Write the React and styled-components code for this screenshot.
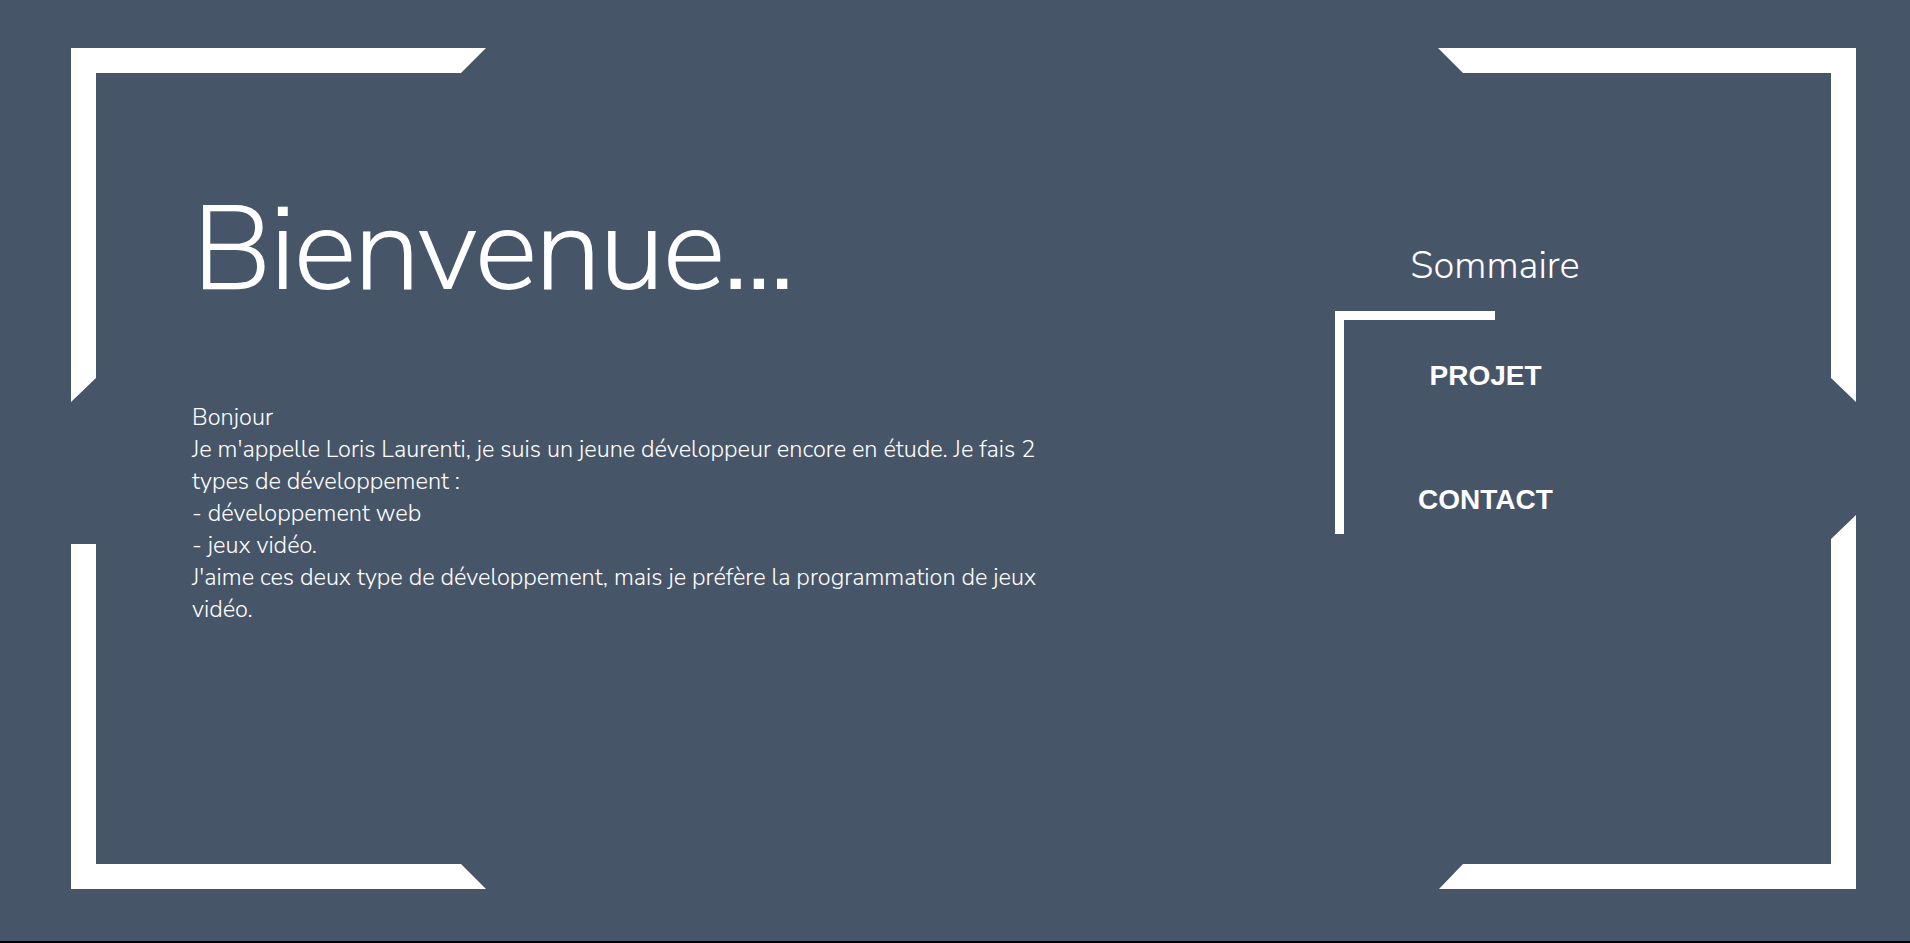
import React from "react";
import styled, { createGlobalStyle } from "styled-components";

const GlobalStyle = createGlobalStyle`
  html, body {
    margin: 0;
    padding: 0;
    background-color: #000;
  }
  * {
    box-sizing: border-box;
  }
`;

const Page = styled.div`
  height: 941px;
  background-color: #475569;
  padding: 48px 54px 52px 71px;
  overflow: hidden;
`;

const Frame = styled.div`
  position: relative;
  height: 100%;
`;

// decorative corner brackets, drawn with clip-path
const Corner = styled.div`
  position: absolute;
  background-color: #fff;
  width: ${(p) => p.w}px;
  height: ${(p) => p.h}px;
  clip-path: ${(p) => p.clip};
  ${(p) => p.pos}
`;

const Content = styled.div`
  display: flex;
  padding: 130px 0 0 121px;
`;

const Main = styled.section`
  width: 870px;
  color: #fff;
`;

const Title = styled.h1`
  margin: 0;
  font-family: "Nunito Sans", "Nunito", "Open Sans", sans-serif;
  font-weight: 300;
  font-size: 120px;
  letter-spacing: -3px;
  line-height: 1.2;
`;

const Intro = styled.p`
  margin: 79px 0 0;
  font-family: "Nunito Sans", "Nunito", "Open Sans", sans-serif;
  font-weight: 300;
  font-size: 23.5px;
  line-height: 32px;
`;

const Side = styled.nav`
  width: 320px;
  margin-left: 273px;
  padding-top: 65px;
  color: #fff;
`;

const SideTitle = styled.h2`
  margin: 0 0 22px;
  text-align: center;
  font-family: "Nunito Sans", "Nunito", "Open Sans", sans-serif;
  font-weight: 300;
  font-size: 38px;
  line-height: 1.2;
`;

const TopBar = styled.div`
  width: 160px;
  height: 9px;
  background-color: #fff;
`;

const LinkList = styled.ul`
  list-style: none;
  margin: 0;
  width: 292px;
  padding: 40px 0 18px;
  border-left: 9px solid #fff;
  display: flex;
  flex-direction: column;
  gap: 92px;
`;

const NavLink = styled.a`
  display: block;
  text-align: center;
  color: #fff;
  text-decoration: none;
  font-family: "Liberation Sans", Arial, sans-serif;
  font-weight: 700;
  font-size: 28px;
  line-height: 32px;
`;

const corners = [
  {
    w: 415,
    h: 354,
    pos: "left: 0; top: 0;",
    clip: "polygon(0 0, 415px 0, 390px 25px, 25px 25px, 25px 330px, 0 354px)",
  },
  {
    w: 415,
    h: 345,
    pos: "left: 0; bottom: 0;",
    clip: "polygon(0 0, 25px 0, 25px 320px, 390px 320px, 415px 345px, 0 345px)",
  },
  {
    w: 418,
    h: 354,
    pos: "right: 0; top: 0;",
    clip: "polygon(0 0, 418px 0, 418px 354px, 393px 330px, 393px 25px, 25px 25px)",
  },
  {
    w: 417,
    h: 374,
    pos: "right: 0; bottom: 0;",
    clip: "polygon(417px 0, 417px 374px, 0 374px, 24px 349px, 392px 349px, 392px 24px)",
  },
];

const App = () => {
  return (
    <>
      <GlobalStyle />
      <Page>
        <Frame>
          {corners.map((c, i) => (
            <Corner key={i} w={c.w} h={c.h} pos={c.pos} clip={c.clip} />
          ))}
          <Content>
            <Main>
              <Title>Bienvenue...</Title>
              <Intro>
                Bonjour
                <br />
                Je m'appelle Loris Laurenti, je suis un jeune développeur encore en étude. Je fais 2 types de
                développement :
                <br />
                - développement web
                <br />
                - jeux vidéo.
                <br />
                J'aime ces deux type de développement, mais je préfère la programmation de jeux vidéo.
              </Intro>
            </Main>
            <Side>
              <SideTitle>Sommaire</SideTitle>
              <TopBar />
              <LinkList>
                <li>
                  <NavLink href="#projet">PROJET</NavLink>
                </li>
                <li>
                  <NavLink href="#contact">CONTACT</NavLink>
                </li>
              </LinkList>
            </Side>
          </Content>
        </Frame>
      </Page>
    </>
  );
};

export default App;
